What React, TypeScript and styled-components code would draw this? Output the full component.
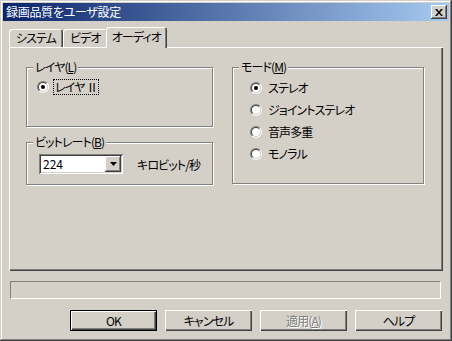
import React from 'react'
import styled, { createGlobalStyle } from 'styled-components'

const GlobalStyle = createGlobalStyle`
    html, body {
        margin: 0;
        padding: 0;
        background: #d4d0c8;
    }
    body {
        font-family: "Noto Sans CJK JP", "Liberation Sans", sans-serif;
        font-size: 12px;
        font-feature-settings: "palt";
        letter-spacing: -0.9px;
        color: #000;
    }
`

const Window = styled.div`
    box-sizing: border-box;
    width: 452px;
    height: 341px;
    padding: 3px;
    background: #d4d0c8;
    display: flex;
    flex-direction: column;
    box-shadow: inset -1px -1px #404040, inset 1px 1px #d4d0c8, inset -2px -2px #808080, inset 2px 2px #fff;
`
const TitleBar = styled.div`
    height: 18px;
    display: flex;
    align-items: center;
    justify-content: space-between;
    padding: 0 2px 0 2px;
    background: linear-gradient(to right, #0a246a, #a6caf0);
`
const TitleText = styled.span`
    color: #fff;
    font-size: 12px;
    letter-spacing: -0.3px;
    line-height: 18px;
    padding-left: 1px;
`
const CloseButton = styled.div`
    width: 16px;
    height: 14px;
    box-sizing: border-box;
    background: #d4d0c8;
    display: flex;
    align-items: center;
    justify-content: center;
    box-shadow: inset -1px -1px #404040, inset 1px 1px #fff, inset -2px -2px #808080;
`
const Body = styled.div`
    padding: 6px 6px 0 6px;
    display: flex;
    flex-direction: column;
`
const TabStrip = styled.div`
    display: flex;
    align-items: flex-end;
    height: 20px;
    position: relative;
    z-index: 1;
`
const Tab = styled.div<{ $active?: boolean }>`
    box-sizing: border-box;
    height: ${p => (p.$active ? '21px' : '18px')};
    margin: ${p => (p.$active ? '0 -2px -1px -2px' : '0')};
    padding: ${p => (p.$active ? '1px 6px 0 6px' : '0 7px')};
    background: #d4d0c8;
    border-top-left-radius: 3px;
    border-top-right-radius: 3px;
    line-height: 17px;
    white-space: nowrap;
    position: relative;
    z-index: ${p => (p.$active ? 2 : 1)};
    box-shadow: inset 1px 1px #fff, inset -1px 0 #404040, inset -2px 0 #808080;
`
const Panel = styled.div`
    box-sizing: border-box;
    height: 224px;
    padding: 20px 17px 0 17px;
    display: grid;
    grid-template-columns: 187px 192px;
    column-gap: 19px;
    align-items: start;
    box-shadow: inset 1px 1px #fff, inset -1px -1px #404040, inset -2px -2px #808080;
`
const Column = styled.div`
    display: flex;
    flex-direction: column;
    gap: 15px;
`
const GroupBox = styled.div<{ $height: number }>`
    position: relative;
    box-sizing: border-box;
    height: ${p => p.$height}px;
    border: 1px solid #808080;
    box-shadow: inset 1px 1px #fff, 1px 1px #fff;
`
const GroupLabel = styled.span`
    position: absolute;
    top: -9px;
    left: 6px;
    padding: 0 2px;
    background: #d4d0c8;
    line-height: 16px;
`
const Underline = styled.span`
    text-decoration: underline;
`
const RadioList = styled.div<{ $left: number; $top: number }>`
    display: flex;
    flex-direction: column;
    gap: 8px;
    padding: ${p => `${p.$top}px 0 0 ${p.$left}px`};
`
const RadioRow = styled.div`
    display: flex;
    align-items: center;
    height: 14px;
    gap: 5px;
`
const RadioCircle = styled.span<{ $checked?: boolean }>`
    box-sizing: border-box;
    width: 12px;
    height: 12px;
    border-radius: 50%;
    border: 1px solid;
    border-color: #808080 #fff #fff #808080;
    position: relative;
    flex: none;
    &::before {
        content: '';
        position: absolute;
        inset: 0;
        box-sizing: border-box;
        border-radius: 50%;
        border: 1px solid;
        border-color: #404040 #d4d0c8 #d4d0c8 #404040;
        background: #fff;
    }
    &::after {
        content: '';
        display: ${p => (p.$checked ? 'block' : 'none')};
        position: absolute;
        left: 3px;
        top: 3px;
        width: 4px;
        height: 4px;
        border-radius: 50%;
        background: #000;
    }
`
const RadioText = styled.span<{ $focused?: boolean }>`
    line-height: 14px;
    padding: 0 1px;
    outline: ${p => (p.$focused ? '1px dotted #000' : 'none')};
`
const ComboRow = styled.div`
    display: flex;
    align-items: center;
    gap: 14px;
    padding: 11px 0 0 12px;
`
const Combo = styled.div`
    box-sizing: border-box;
    width: 84px;
    height: 20px;
    background: #fff;
    display: flex;
    align-items: center;
    justify-content: space-between;
    padding: 2px;
    box-shadow: inset 1px 1px #808080, inset -1px -1px #fff, inset 2px 2px #404040, inset -2px -2px #d4d0c8;
`
const ComboValue = styled.span`
    padding-left: 2px;
    line-height: 16px;
    letter-spacing: 0;
`
const ComboButton = styled.div`
    box-sizing: border-box;
    width: 16px;
    height: 16px;
    background: #d4d0c8;
    display: flex;
    align-items: center;
    justify-content: center;
    box-shadow: inset -1px -1px #404040, inset 1px 1px #fff, inset -2px -2px #808080;
`
const StatusBox = styled.div`
    box-sizing: border-box;
    height: 18px;
    margin: 10px 2px 0 1px;
    border: 1px solid;
    border-color: #808080 #fff #fff #808080;
`
const ButtonRow = styled.div`
    display: flex;
    justify-content: flex-end;
    gap: 8px;
    margin: 11px 1px 0 0;
`
const Button = styled.div<{ $default?: boolean; $disabled?: boolean }>`
    box-sizing: border-box;
    width: 87px;
    height: 21px;
    display: flex;
    align-items: center;
    justify-content: center;
    color: ${p => (p.$disabled ? '#808080' : '#000')};
    text-shadow: ${p => (p.$disabled ? '1px 1px #fff' : 'none')};
    box-shadow: ${p =>
        p.$default
            ? 'inset 0 0 0 1px #000, inset 2px 2px #fff, inset -2px -2px #404040, inset -3px -3px #808080'
            : 'inset 1px 1px #fff, inset -1px -1px #404040, inset -2px -2px #808080'};
`

const modes = ['ステレオ', 'ジョイントステレオ', '音声多重', 'モノラル']

const App = () => {
    return (
        <>
            <GlobalStyle />
            <Window>
                <TitleBar>
                    <TitleText>録画品質をユーザ設定</TitleText>
                    <CloseButton>
                        <svg width="8" height="7" viewBox="0 0 8 7">
                            <path d="M0 0h2l2 2.5L6 0h2L5 3.5 8 7H6L4 4.5 2 7H0l3-3.5z" fill="#000" />
                        </svg>
                    </CloseButton>
                </TitleBar>
                <Body>
                    <TabStrip>
                        <Tab>システム</Tab>
                        <Tab>ビデオ</Tab>
                        <Tab $active>オーディオ</Tab>
                    </TabStrip>
                    <Panel>
                        <Column>
                            <GroupBox $height={60}>
                                <GroupLabel>レイヤ(<Underline>L</Underline>)</GroupLabel>
                                <RadioList $left={10} $top={12}>
                                    <RadioRow>
                                        <RadioCircle $checked />
                                        <RadioText $focused>レイヤ Ⅱ</RadioText>
                                    </RadioRow>
                                </RadioList>
                            </GroupBox>
                            <GroupBox $height={43}>
                                <GroupLabel>ビットレート(<Underline>B</Underline>)</GroupLabel>
                                <ComboRow>
                                    <Combo>
                                        <ComboValue>224</ComboValue>
                                        <ComboButton>
                                            <svg width="7" height="4" viewBox="0 0 7 4">
                                                <path d="M0 0h7L3.5 4z" fill="#000" />
                                            </svg>
                                        </ComboButton>
                                    </Combo>
                                    <span>キロビット/秒</span>
                                </ComboRow>
                            </GroupBox>
                        </Column>
                        <GroupBox $height={117}>
                            <GroupLabel>モード(<Underline>M</Underline>)</GroupLabel>
                            <RadioList $left={17} $top={13}>
                                {modes.map((m, i) => (
                                    <RadioRow key={m}>
                                        <RadioCircle $checked={i === 0} />
                                        <RadioText>{m}</RadioText>
                                    </RadioRow>
                                ))}
                            </RadioList>
                        </GroupBox>
                    </Panel>
                    <StatusBox />
                    <ButtonRow>
                        <Button $default>OK</Button>
                        <Button>キャンセル</Button>
                        <Button $disabled>適用(<Underline>A</Underline>)</Button>
                        <Button>ヘルプ</Button>
                    </ButtonRow>
                </Body>
            </Window>
        </>
    )
}

export default App
